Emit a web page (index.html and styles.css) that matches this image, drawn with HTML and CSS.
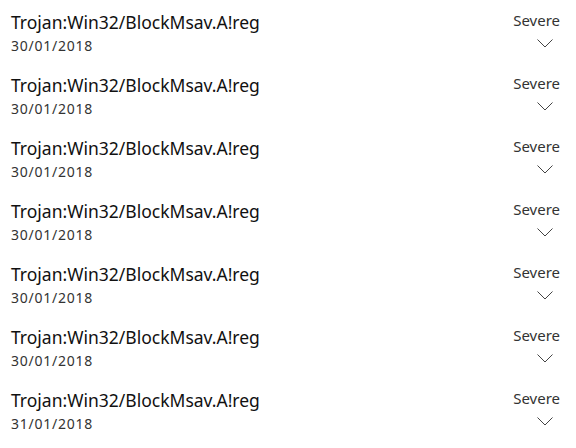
FILE: index.html
```html
<!DOCTYPE html>
<html>
<head>
<meta charset="utf-8">
<link rel="stylesheet" href="styles.css">
</head>
<body>
<ul class="list">
  <li class="row">
    <div class="info"><div class="name">Trojan:Win32/BlockMsav.A!reg</div><div class="date">30/01/2018</div></div>
    <div class="side"><div class="level">Severe</div><svg class="chev" width="16" height="9" viewBox="0 0 16 9"><path d="M0.5 0.5 L8 8 L15.5 0.5" fill="none" stroke="#444" stroke-width="1"/></svg></div>
  </li>
  <li class="row">
    <div class="info"><div class="name">Trojan:Win32/BlockMsav.A!reg</div><div class="date">30/01/2018</div></div>
    <div class="side"><div class="level">Severe</div><svg class="chev" width="16" height="9" viewBox="0 0 16 9"><path d="M0.5 0.5 L8 8 L15.5 0.5" fill="none" stroke="#444" stroke-width="1"/></svg></div>
  </li>
  <li class="row">
    <div class="info"><div class="name">Trojan:Win32/BlockMsav.A!reg</div><div class="date">30/01/2018</div></div>
    <div class="side"><div class="level">Severe</div><svg class="chev" width="16" height="9" viewBox="0 0 16 9"><path d="M0.5 0.5 L8 8 L15.5 0.5" fill="none" stroke="#444" stroke-width="1"/></svg></div>
  </li>
  <li class="row">
    <div class="info"><div class="name">Trojan:Win32/BlockMsav.A!reg</div><div class="date">30/01/2018</div></div>
    <div class="side"><div class="level">Severe</div><svg class="chev" width="16" height="9" viewBox="0 0 16 9"><path d="M0.5 0.5 L8 8 L15.5 0.5" fill="none" stroke="#444" stroke-width="1"/></svg></div>
  </li>
  <li class="row">
    <div class="info"><div class="name">Trojan:Win32/BlockMsav.A!reg</div><div class="date">30/01/2018</div></div>
    <div class="side"><div class="level">Severe</div><svg class="chev" width="16" height="9" viewBox="0 0 16 9"><path d="M0.5 0.5 L8 8 L15.5 0.5" fill="none" stroke="#444" stroke-width="1"/></svg></div>
  </li>
  <li class="row">
    <div class="info"><div class="name">Trojan:Win32/BlockMsav.A!reg</div><div class="date">30/01/2018</div></div>
    <div class="side"><div class="level">Severe</div><svg class="chev" width="16" height="9" viewBox="0 0 16 9"><path d="M0.5 0.5 L8 8 L15.5 0.5" fill="none" stroke="#444" stroke-width="1"/></svg></div>
  </li>
  <li class="row">
    <div class="info"><div class="name">Trojan:Win32/BlockMsav.A!reg</div><div class="date">31/01/2018</div></div>
    <div class="side"><div class="level">Severe</div><svg class="chev" width="16" height="9" viewBox="0 0 16 9"><path d="M0.5 0.5 L8 8 L15.5 0.5" fill="none" stroke="#444" stroke-width="1"/></svg></div>
  </li>
</ul>
</body>
</html>
```
FILE: styles.css
```css
html, body {
  margin: 0;
  padding: 0;
  background: #fff;
}
body {
  font-family: "Noto Sans", "Open Sans", sans-serif;
  color: #000;
}
.list {
  list-style: none;
  margin: 0;
  padding: 0;
}
.row {
  display: flex;
  justify-content: space-between;
  height: 63px;
  padding: 0 16px 0 11px;
}
.info {
  padding-top: 10px;
}
.name {
  font-size: 17.5px;
  line-height: 24px;
  color: #111;
}
.date {
  margin-top: 2px;
  font-size: 14px;
  line-height: 20px;
  letter-spacing: 0.75px;
  color: #333;
}
.side {
  display: flex;
  flex-direction: column;
  align-items: flex-end;
  padding-top: 10px;
}
.level {
  font-size: 15px;
  line-height: 20px;
  color: #333;
}
.chev {
  display: block;
  margin-top: 9px;
  margin-right: 7px;
}
```
